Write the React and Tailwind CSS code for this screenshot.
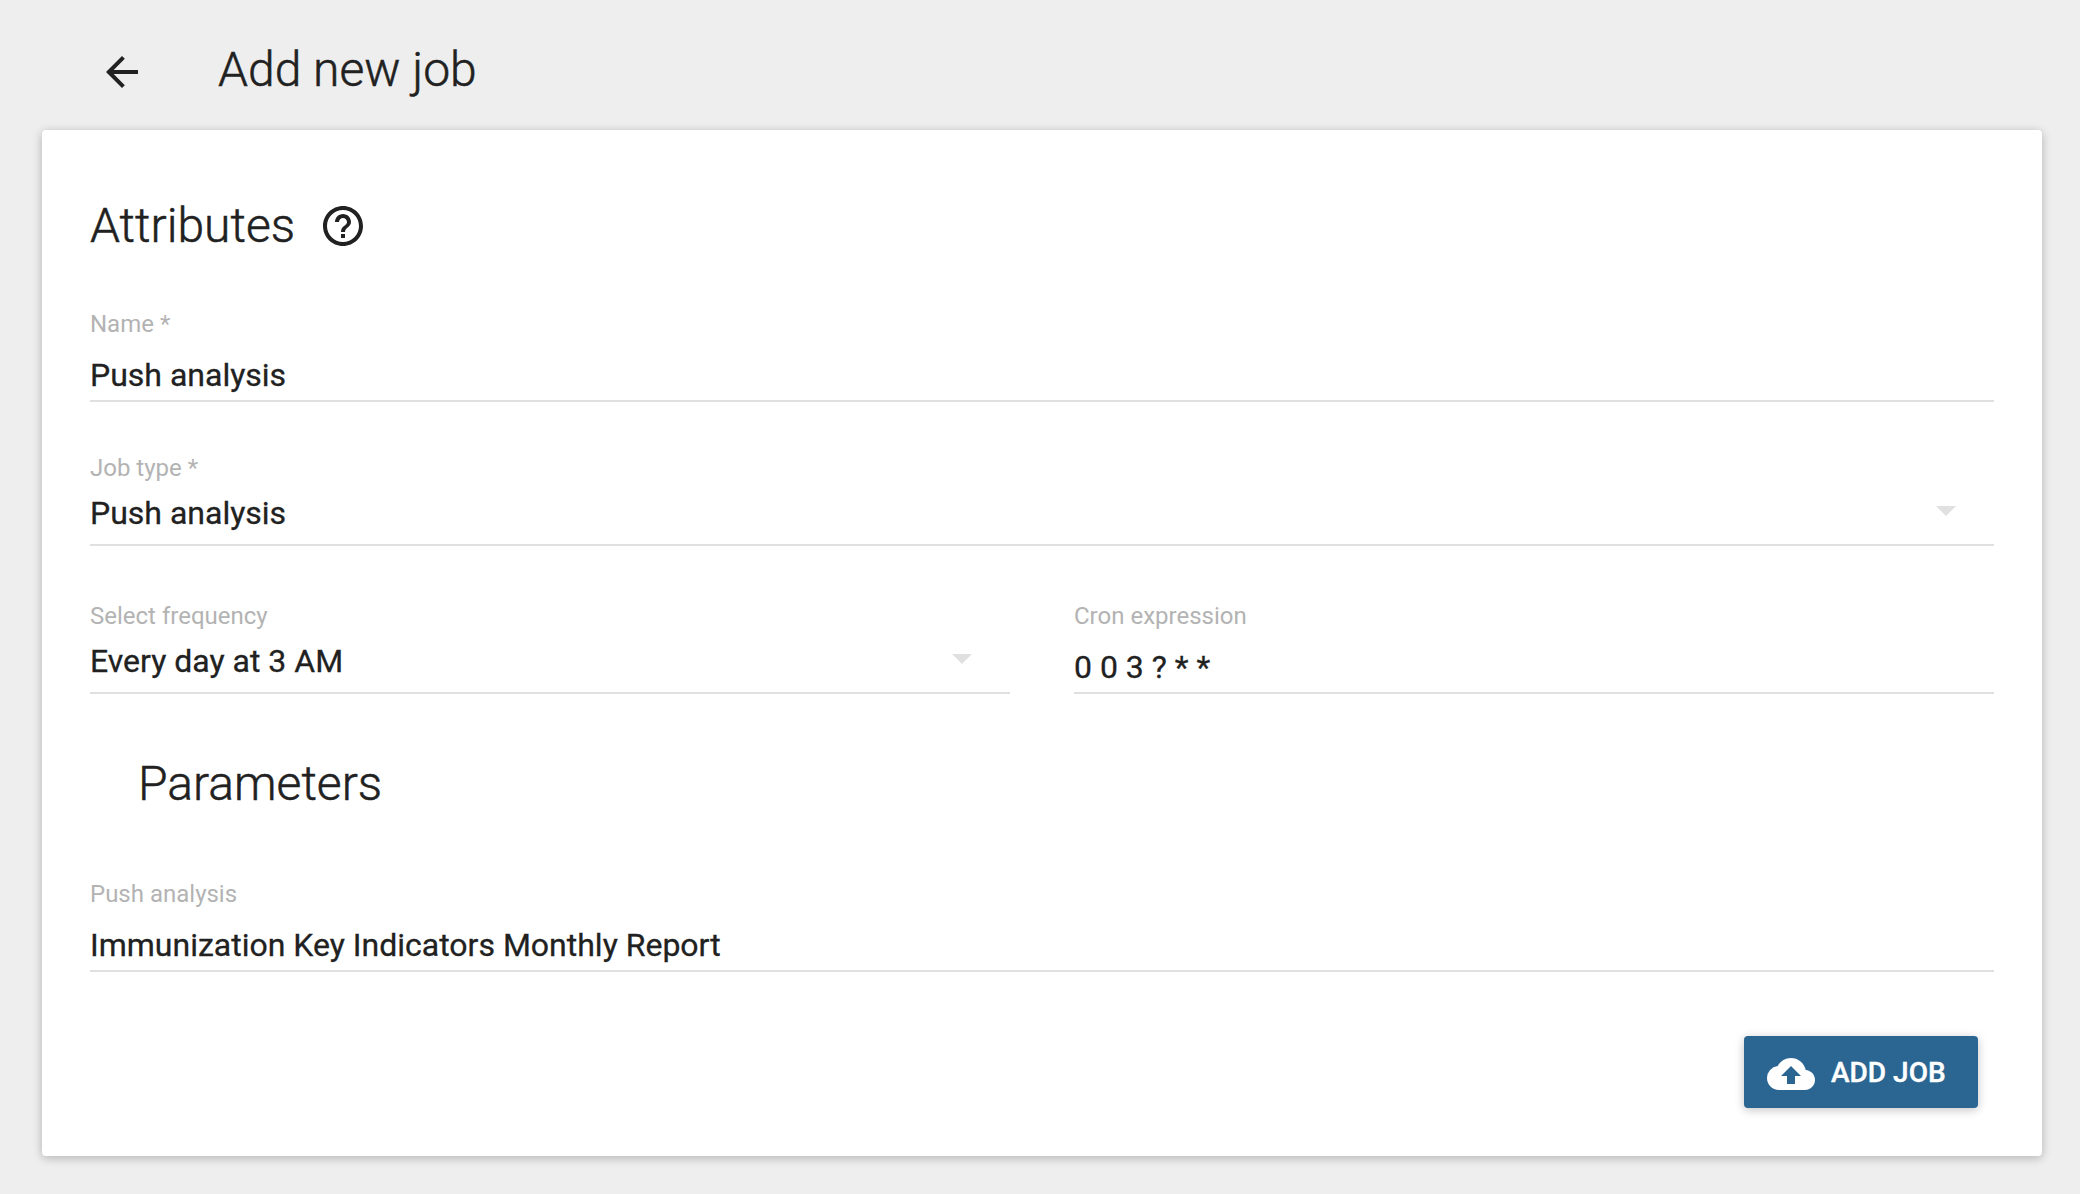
import React from "react";
import { MdArrowBack, MdHelpOutline, MdArrowDropDown, MdCloudUpload } from "react-icons/md";

function Field({ label, value, select = false, className = "" }) {
  return (
    <div className={`relative border-b-2 border-[#e0e0e0] ${className}`}>
      <div className="text-[24px] leading-[28px] text-[#b3b3b3]">{label}</div>
      {select ? (
        <div className="mt-[11px] pb-[11px] text-[32px] leading-[40px] [-webkit-text-stroke:0.3px]">{value}</div>
      ) : (
        <div className="mt-[17px] pb-[5px] text-[32px] leading-[40px] [-webkit-text-stroke:0.3px]">{value}</div>
      )}
      {select && (
        <MdArrowDropDown className="absolute right-6 bottom-[10px] size-12 text-[#e0e0e0]" />
      )}
    </div>
  );
}

export default function App() {
  return (
    <div className="h-[1194px] w-full overflow-hidden bg-[#eeeeee] font-['Roboto',sans-serif] text-[#212121]">
      <header className="flex h-[130px] pl-[98px]">
        <MdArrowBack className="mt-12 size-12" />
        <h1 className="mt-[38px] ml-[72px] text-[48px] leading-[64px] font-light [-webkit-text-stroke:0.5px]">Add new job</h1>
      </header>
      <main className="mx-[42px] mr-[38px] rounded-[4px] bg-white px-12 pt-16 pb-12 shadow-[0_2px_12px_rgba(0,0,0,0.12),0_2px_8px_rgba(0,0,0,0.14)]">
        <div className="flex">
          <h2 className="w-[229px] text-[48px] leading-[64px] font-light [-webkit-text-stroke:0.5px]">Attributes</h2>
          <MdHelpOutline className="mt-2 size-12" />
        </div>
        <Field className="mt-[52px]" label="Name *" value="Push analysis" />
        <Field className="mt-[52px]" label="Job type *" value="Push analysis" select />
        <div className="mt-14 grid grid-cols-2 gap-16">
          <Field label="Select frequency" value="Every day at 3 AM" select />
          <Field label="Cron expression" value="0 0 3 ? * *" />
        </div>
        <h2 className="mt-[58px] pl-12 text-[48px] leading-[64px] font-light [-webkit-text-stroke:0.5px]">Parameters</h2>
        <Field className="mt-16" label="Push analysis" value="Immunization Key Indicators Monthly Report" />
        <div className="mt-16 mr-4 flex justify-end">
          <button className="flex h-[72px] w-[234px] items-center rounded-[4px] bg-[#2b6693] pl-[23px] text-white shadow-[0_2px_12px_rgba(0,0,0,0.12),0_2px_8px_rgba(0,0,0,0.12)]">
            <MdCloudUpload className="mt-[4px] size-12" />
            <span className="mt-[2px] ml-4 text-[28px] leading-[40px] font-medium whitespace-nowrap [-webkit-text-stroke:0.4px]">ADD JOB</span>
          </button>
        </div>
      </main>
    </div>
  );
}
